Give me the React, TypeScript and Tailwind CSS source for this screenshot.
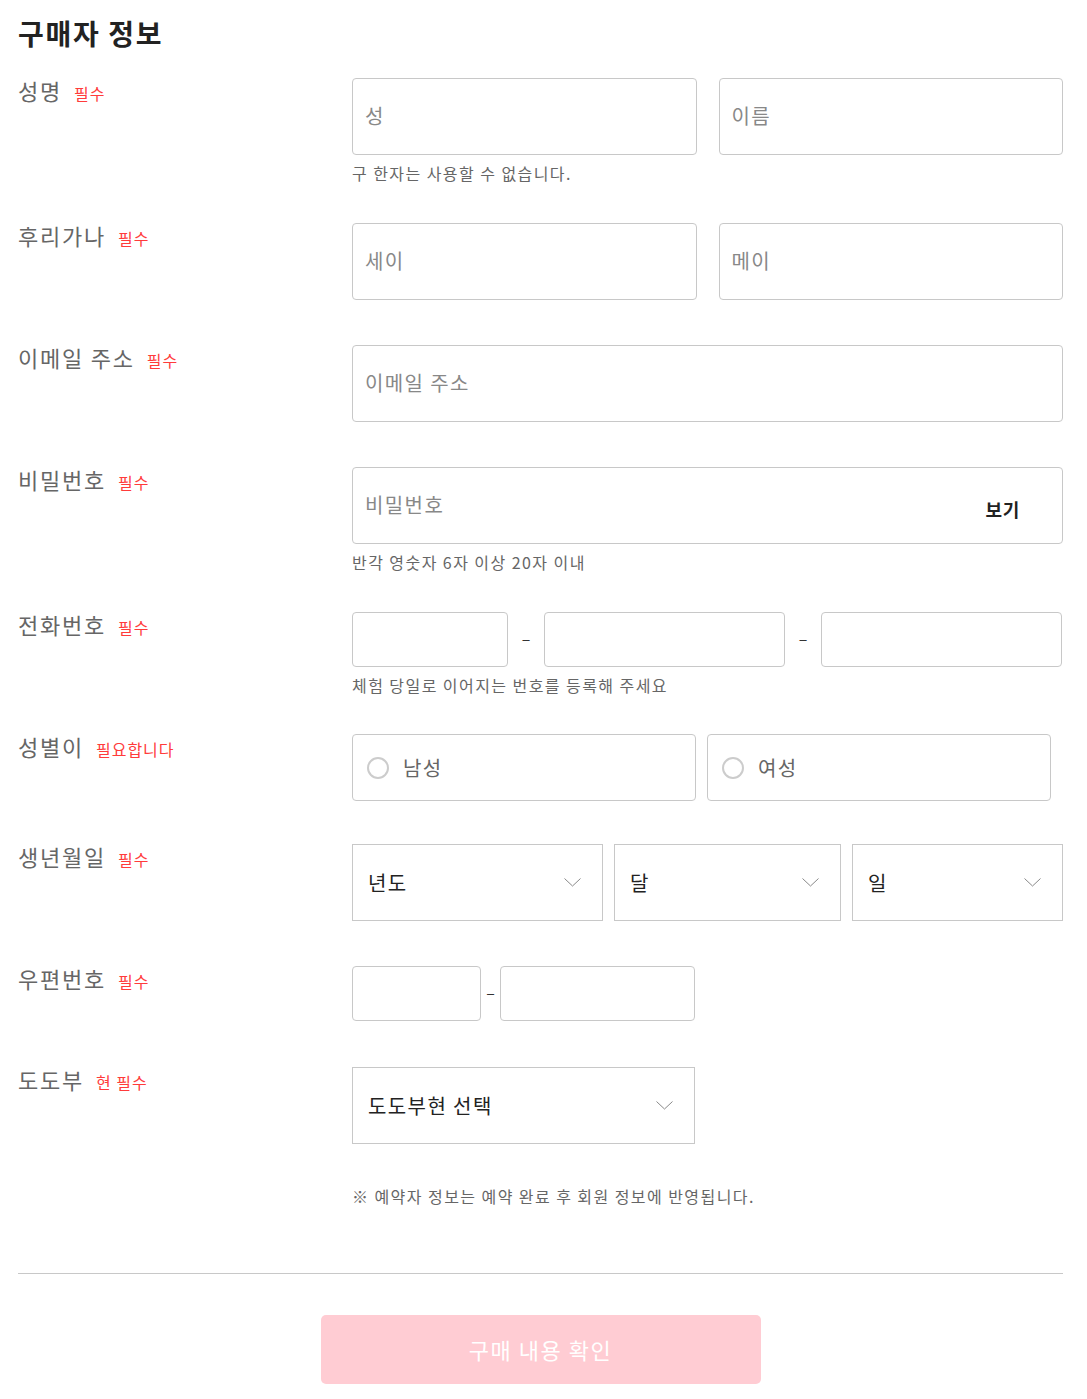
import React from 'react';

const field =
  'h-full w-full rounded-[4px] border border-[#c8c8c8] bg-white px-3 pb-[3px] text-[20px] tracking-[0.07em] text-[#333] outline-none placeholder:text-[#888]';

function Label({ text, req }: { text: string; req: string }) {
  return (
    <div className="-mt-[3px] flex w-[334px] shrink-0 items-baseline">
      <span className="text-[22px] leading-[30px] tracking-[0.08em] text-[#666]">{text}</span>
      <span className="ml-3 text-[16px] leading-[30px] tracking-[0.06em] text-[#ff3b3b]">{req}</span>
    </div>
  );
}

function Help({ children }: { children: React.ReactNode }) {
  return <p className="mt-2 text-[16px] leading-[20px] tracking-[0.09em] text-[#666]">{children}</p>;
}

function Chevron() {
  return (
    <svg width="17" height="9" viewBox="0 0 17 9" fill="none" className="shrink-0">
      <polyline points="0.5,0.5 8.5,8 16.5,0.5" stroke="#888" strokeWidth="1" />
    </svg>
  );
}

function Select({ text, w }: { text: string; w: string }) {
  return (
    <div className={`flex h-[77px] ${w} items-center justify-between border border-[#c8c8c8] bg-white pl-[15px] pr-[21px]`}>
      <span className="text-[20px] tracking-[0.07em] text-[#222]">{text}</span>
      <Chevron />
    </div>
  );
}

function Radio({ text }: { text: string }) {
  return (
    <label className="flex h-[67px] w-[344px] items-center gap-[14px] rounded-[4px] border border-[#c8c8c8] pl-[14px]">
      <span className="h-[22px] w-[22px] rounded-full border-2 border-[#ccc]" />
      <span className="text-[20px] tracking-[0.07em] text-[#666]">{text}</span>
    </label>
  );
}

export default function App() {
  return (
    <div className="min-h-[1399px] w-[1087px] bg-white pl-[18px] pr-[24px] pt-[15px] font-['Noto_Sans_CJK_KR','Noto_Sans',sans-serif]">
      <h1 className="mb-[27px] text-[28px] font-bold leading-[36px] tracking-[0.06em] text-[#222]">구매자 정보</h1>

      {/* 성명 */}
      <div className="mb-10 flex">
        <Label text="성명" req="필수" />
        <div className="w-[711px]">
          <div className="grid h-[77px] grid-cols-2 gap-[22px]">
            <input className={field} placeholder="성" />
            <input className={field} placeholder="이름" />
          </div>
          <Help>구 한자는 사용할 수 없습니다.</Help>
        </div>
      </div>

      {/* 후리가나 */}
      <div className="mb-[45px] flex">
        <Label text="후리가나" req="필수" />
        <div className="grid h-[77px] w-[711px] grid-cols-2 gap-[22px]">
          <input className={field} placeholder="세이" />
          <input className={field} placeholder="메이" />
        </div>
      </div>

      {/* 이메일 */}
      <div className="mb-[45px] flex">
        <Label text="이메일 주소" req="필수" />
        <div className="h-[77px] w-[711px]">
          <input className={field} placeholder="이메일 주소" />
        </div>
      </div>

      {/* 비밀번호 */}
      <div className="mb-10 flex">
        <Label text="비밀번호" req="필수" />
        <div className="w-[711px]">
          <div className="flex h-[77px] items-center rounded-[4px] border border-[#c8c8c8] pl-3 pr-[42px]">
            <input
              className="h-full flex-1 pb-[3px] text-[20px] tracking-[0.07em] text-[#333] outline-none placeholder:text-[#888]"
              placeholder="비밀번호"
            />
            <span className="mt-2 text-[18px] font-bold tracking-[0.04em] text-[#222]">보기</span>
          </div>
          <Help>반각 영숫자 6자 이상 20자 이내</Help>
        </div>
      </div>

      {/* 전화번호 */}
      <div className="mb-[39px] flex">
        <Label text="전화번호" req="필수" />
        <div className="w-[711px]">
          <div className="flex h-[55px] items-center">
            <div className="h-full w-[156px]"><input className={field} /></div>
            <span className="w-[36px] pb-[3px] text-center text-[16px] text-[#333]">–</span>
            <div className="h-full w-[241px]"><input className={field} /></div>
            <span className="w-[36px] pb-[3px] text-center text-[16px] text-[#333]">–</span>
            <div className="h-full w-[241px]"><input className={field} /></div>
          </div>
          <Help>체험 당일로 이어지는 번호를 등록해 주세요</Help>
        </div>
      </div>

      {/* 성별 */}
      <div className="mb-[43px] flex">
        <Label text="성별이" req="필요합니다" />
        <div className="flex w-[711px] gap-[11px]">
          <Radio text="남성" />
          <Radio text="여성" />
        </div>
      </div>

      {/* 생년월일 */}
      <div className="mb-[45px] flex">
        <Label text="생년월일" req="필수" />
        <div className="flex w-[711px] gap-[11px]">
          <Select text="년도" w="w-[251px]" />
          <Select text="달" w="w-[227px]" />
          <Select text="일" w="w-[211px]" />
        </div>
      </div>

      {/* 우편번호 */}
      <div className="mb-[46px] flex">
        <Label text="우편번호" req="필수" />
        <div className="flex h-[55px] w-[711px] items-center">
          <div className="h-full w-[129px]"><input className={field} /></div>
          <span className="w-[19px] pb-[3px] text-center text-[16px] text-[#333]">–</span>
          <div className="h-full w-[195px]"><input className={field} /></div>
        </div>
      </div>

      {/* 도도부현 */}
      <div className="flex">
        <Label text="도도부" req="현 필수" />
        <div className="w-[711px]">
          <Select text="도도부현 선택" w="w-[343px]" />
          <p className="mt-[42px] text-[16px] leading-[20px] tracking-[0.09em] text-[#666]">
            ※ 예약자 정보는 예약 완료 후 회원 정보에 반영됩니다.
          </p>
        </div>
      </div>

      <hr className="mt-[67px] border-t border-[#c8c8c8]" />

      <div className="mt-[41px] flex justify-center">
        <button className="h-[69px] w-[440px] rounded-[5px] bg-[#ffccd3] text-[22px] tracking-[0.07em] text-white">
          구매 내용 확인
        </button>
      </div>
    </div>
  );
}
